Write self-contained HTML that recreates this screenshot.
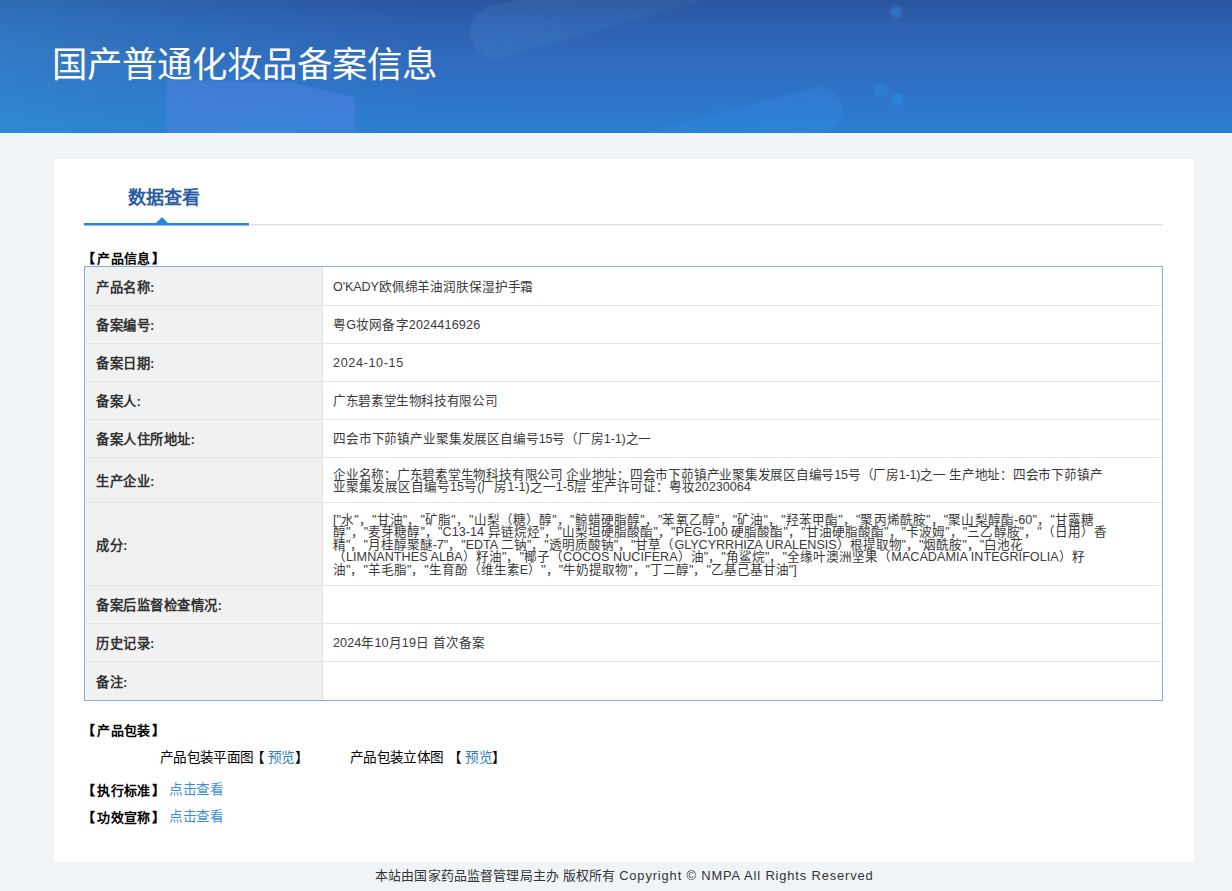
<!DOCTYPE html>
<html lang="zh-CN">
<head>
<meta charset="utf-8">
<title>国产普通化妆品备案信息</title>
<style>
*{box-sizing:border-box;margin:0;padding:0}
html,body{width:1232px;height:891px;overflow:hidden}
body{position:relative;background:#f0f4f7;font-family:"Liberation Sans",sans-serif;color:#333;font-size:12.6px;line-height:1}
.abs{position:absolute;white-space:nowrap}
/* header */
#hd{position:absolute;left:0;top:0;width:1232px;height:132.5px;overflow:hidden;
 background:linear-gradient(90deg,rgba(54,160,215,.30) 0,rgba(54,160,215,.16) 14%,rgba(54,160,215,0) 34%),linear-gradient(180deg,#2a559e 0%,#2e62b2 22%,#306cc1 50%,#2d76cb 78%,#2a7ed1 100%)}
#hd svg{position:absolute;left:0;top:0}
#title{left:52px;top:39px;font-size:35.4px;line-height:52px;color:#fff;letter-spacing:0}
/* card */
#card{position:absolute;left:54px;top:159px;width:1140px;height:703px;background:#fff}
#tab{left:127.5px;top:185px;font-size:18px;line-height:26px;font-weight:bold;color:#2b5ca3}
#gline{position:absolute;left:84px;top:224px;width:1079px;height:1px;background:#e4e4e4;box-shadow:0 1px 0 #f4f4f4}
#bline{position:absolute;left:84px;top:223px;width:165px;height:2px;background:#2a83d9;box-shadow:0 1px 0 rgba(42,131,217,.45)}
#tri{position:absolute;left:156px;top:217px;width:0;height:0;border-left:6px solid transparent;border-right:6px solid transparent;border-bottom:6px solid #2c84da}
.sec{font-weight:bold;color:#000;font-size:13px;line-height:18px}
/* table */
#tb{position:absolute;left:84px;top:266px;width:1079px;height:435px;border:1px solid #88aee7;background:#fff}
.r{position:absolute;left:0;width:1077px;border-bottom:1px solid #e5e5e5}
.r .l{position:absolute;left:0;top:0;bottom:0;width:238px;background:#f1f1f1;border-right:1px solid #e2e2e2;
 font-weight:bold;font-size:13.3px;letter-spacing:.5px;color:#333;padding-left:11px;padding-top:3px;display:flex;align-items:center;white-space:nowrap}
.r .v{position:absolute;left:238px;top:0;bottom:0;right:0;padding-left:10px;padding-top:2px;overflow:hidden;display:flex;align-items:center;white-space:nowrap;color:#3a3a3a}
.r .v .ln{line-height:12.5px;white-space:nowrap;width:max-content}
a,.lk{color:#337ab7;text-decoration:none}
.lk2{color:#3c8ddc}
#ft{left:375px;top:866px;line-height:20px;font-size:12.9px;color:#333}
.hs{margin:0 1.3px 0 2.25px;letter-spacing:.4px}
.pk{font-size:13.6px;letter-spacing:-.7px;line-height:18px;color:#000}
.pk.lk2{color:#3c8ddc;letter-spacing:-.45px}
.bk{margin:0 3.6px 0 -2px}
</style>
</head>
<body>
<div id="hd">
<svg width="1232" height="133" viewBox="0 0 1232 133">
 <defs>
  <filter id="bl" x="-50%" y="-50%" width="200%" height="200%"><feGaussianBlur stdDeviation="1.1"/></filter>
  <filter id="bs" x="-10%" y="-10%" width="120%" height="120%"><feGaussianBlur stdDeviation="0.8"/></filter>
  <linearGradient id="g1" x1="0" x2="1" y1="0" y2="0"><stop offset="0" stop-color="#6ab8ea" stop-opacity=".11"/><stop offset=".45" stop-color="#6ab8ea" stop-opacity=".07"/><stop offset="1" stop-color="#6ab8ea" stop-opacity=".02"/></linearGradient>
  <linearGradient id="g2" x1="0" x2="1" y1="0" y2="0"><stop offset="0" stop-color="#3aa4ff" stop-opacity=".04"/><stop offset=".5" stop-color="#3aa4ff" stop-opacity=".12"/><stop offset="1" stop-color="#3aa4ff" stop-opacity=".17"/></linearGradient>
 </defs>
 <polygon points="167,80 290,82 355,97 355,133 167,133" fill="#5a86ea" opacity="0.38" filter="url(#bs)"/>
 <g transform="rotate(-15.7 496 32)" filter="url(#bs)"><rect x="470" y="6" width="420" height="52" rx="26" fill="url(#g1)"/></g>
 <g transform="rotate(-14.7 820 109.6)" filter="url(#bs)"><rect x="420" y="87.6" width="422" height="44" rx="22" fill="url(#g2)"/></g>
 <g filter="url(#bl)">
 <circle cx="896.1" cy="12.1" r="5.8" fill="#3296e6" opacity="0.38"/>
 <circle cx="881" cy="90" r="7.4" fill="#2896e6" opacity="0.33"/>
 <circle cx="897.4" cy="99.3" r="6" fill="#2396eb" opacity="0.5"/>
 </g>
</svg>
</div>
<div id="title" class="abs">国产普通化妆品备案信息</div>

<div id="card"></div>
<div id="tab" class="abs">数据查看</div>
<div id="gline"></div><div id="bline"></div><div id="tri"></div>

<div class="abs sec" style="left:82px;top:250px">【<span class="hs">产品信息</span>】</div>

<div id="tb">
 <div class="r" style="top:0px;height:39px"><div class="l">产品名称:</div><div class="v"><div><div class="ln" id="L1" style="letter-spacing:-0.122px">O'KADY欧佩绵羊油润肤保湿护手霜</div></div></div></div>
 <div class="r" style="top:39px;height:38px"><div class="l">备案编号:</div><div class="v"><div><div class="ln" id="L2" style="letter-spacing:0.154px">粤G妆网备字2024416926</div></div></div></div>
 <div class="r" style="top:77px;height:38px"><div class="l">备案日期:</div><div class="v"><div><div class="ln" id="L3" style="letter-spacing:0.638px">2024-10-15</div></div></div></div>
 <div class="r" style="top:115px;height:38px"><div class="l">备案人:</div><div class="v"><div><div class="ln" id="L4" style="letter-spacing:-0.362px">广东碧素堂生物科技有限公司</div></div></div></div>
 <div class="r" style="top:153px;height:38px"><div class="l">备案人住所地址:</div><div class="v"><div><div class="ln" id="L5" style="letter-spacing:-0.147px">四会市下茆镇产业聚集发展区自编号15号（厂房1-1)之一</div></div></div></div>
 <div class="r" style="top:191px;height:45px"><div class="l">生产企业:</div><div class="v"><div><div class="ln" id="L6" style="letter-spacing:-0.232px">企业名称：广东碧素堂生物科技有限公司 企业地址：四会市下茆镇产业聚集发展区自编号15号（厂房1-1)之一 生产地址：四会市下茆镇产</div><div class="ln" id="L7" style="letter-spacing:0.011px">业聚集发展区自编号15号(厂房1-1)之一1-5层 生产许可证：粤妆20230064</div></div></div></div>
 <div class="r" style="top:236px;height:83px"><div class="l">成分:</div><div class="v"><div><div class="ln" id="L8" style="letter-spacing:0.115px">["水"，"甘油"，"矿脂"，"山梨（糖）醇"，"鲸蜡硬脂醇"，"苯氧乙醇"，"矿油"，"羟苯甲酯"，"聚丙烯酰胺"，"聚山梨醇酯-60"，"甘露糖</div><div class="ln" id="L9" style="letter-spacing:0.057px">醇"，"麦芽糖醇"，"C13-14 异链烷烃"，"山梨坦硬脂酸酯"，"PEG-100 硬脂酸酯"，"甘油硬脂酸酯"，"卡波姆"，"三乙醇胺"，"（日用）香</div><div class="ln" id="L10" style="letter-spacing:-0.029px">精"，"月桂醇聚醚-7"，"EDTA 二钠"，"透明质酸钠"，"甘草（GLYCYRRHIZA URALENSIS）根提取物"，"烟酰胺"，"白池花</div><div class="ln" id="L11" style="letter-spacing:0.039px">（LIMNANTHES ALBA）籽油"，"椰子（COCOS NUCIFERA）油"，"角鲨烷"，"全缘叶澳洲坚果（MACADAMIA INTEGRIFOLIA）籽</div><div class="ln" id="L12" style="letter-spacing:-0.006px">油"，"羊毛脂"，"生育酚（维生素E）"，"牛奶提取物"，"丁二醇"，"乙基己基甘油"]</div></div></div></div>
 <div class="r" style="top:319px;height:38px"><div class="l">备案后监督检查情况:</div><div class="v"><div></div></div></div>
 <div class="r" style="top:357px;height:38px"><div class="l">历史记录:</div><div class="v"><div><div class="ln" id="L13" style="letter-spacing:0.097px">2024年10月19日 首次备案</div></div></div></div>
 <div class="r" style="top:395px;height:38px;border-bottom:0"><div class="l">备注:</div><div class="v"><div></div></div></div>
</div>

<div class="abs sec" style="left:82px;top:722px">【<span class="hs">产品包装</span>】</div>
<div class="abs pk" style="left:160px;top:749px">产品包装平面图<span class="bk">【</span><span class="lk">预览</span>】</div>
<div class="abs pk" style="left:350px;top:749px;word-spacing:4.2px">产品包装立体图 <span class="bk">【</span><span class="lk">预览</span>】</div>
<div class="abs sec" style="left:82px;top:781.5px">【<span class="hs">执行标准</span>】</div>
<div class="abs pk lk2" style="left:169px;top:781px">点击查看</div>
<div class="abs sec" style="left:82px;top:808.5px">【<span class="hs">功效宣称</span>】</div>
<div class="abs pk lk2" style="left:169px;top:808px">点击查看</div>

<div id="ft" class="abs"><span style="letter-spacing:.15px">本站由国家药品监督管理局主办 版权所有 </span><span style="letter-spacing:.86px">Copyright © NMPA All Rights Reserved</span></div>
</body>
</html>
